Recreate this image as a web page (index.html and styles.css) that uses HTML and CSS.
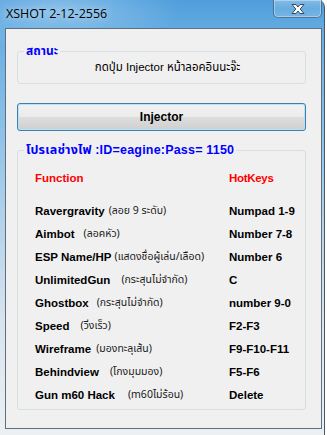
FILE: index.html
```
<!DOCTYPE html>
<html lang="th">
<head>
<meta charset="utf-8">
<title>XSHOT 2-12-2556</title>
<link rel="stylesheet" href="styles.css">
</head>
<body>
<div class="window">
  <div class="titlebar">
    <span class="title">XSHOT 2-12-2556</span>
    <div class="close">
      <svg width="20" height="12" viewBox="0 0 20 12">
        <path d="M4 1.5 H8 L10 4 L12 1.5 H16 L12.2 6 L16 10.5 H12 L10 8 L8 10.5 H4 L7.8 6 Z" fill="#fff" stroke="#3a4a5c" stroke-width="1" stroke-linejoin="round"/>
      </svg>
    </div>
  </div>
  <div class="client">
    <fieldset class="group status">
      <legend>สถานะ</legend>
      <p class="status-text">กดปุ่ม Injector หน้าลอคอินนะจ๊ะ</p>
    </fieldset>
    <button class="btn" type="button">Injector</button>
    <fieldset class="group keys">
      <legend class="wide">โปรเลช่างไฟ :ID=eagine:Pass= 1150</legend>
      <div class="grid">
        <div class="head">Function</div><div class="head hk">HotKeys</div>
        <div class="row-gap"></div>
        <div class="fn"><b>Ravergravity</b><span class="th g4">(ลอย 9 ระดับ)</span></div><div class="key">Numpad 1-9</div>
        <div class="fn"><b>Aimbot</b><span class="th g9">(ลอคหัว)</span></div><div class="key">Number 7-8</div>
        <div class="fn"><b>ESP Name/HP</b><span class="th g3">(แสดงชื่อผู้เล่น/เลือด)</span></div><div class="key">Number 6</div>
        <div class="fn"><b>UnlimitedGun</b><span class="th g11">(กระสุนไม่จำกัด)</span></div><div class="key">C</div>
        <div class="fn"><b>Ghostbox</b><span class="th g8">(กระสุนไม่จำกัด)</span></div><div class="key">number 9-0</div>
        <div class="fn"><b>Speed</b><span class="th g11">(วิ่งเร็ว)</span></div><div class="key">F2-F3</div>
        <div class="fn"><b>Wireframe</b><span class="th g5">(มองทะลุเส้น)</span></div><div class="key">F9-F10-F11</div>
        <div class="fn"><b>Behindview</b><span class="th g11">(โกงมุมมอง)</span></div><div class="key">F5-F6</div>
        <div class="fn"><b>Gun m60 Hack</b><span class="th g13">(m60ไม่ร้อน)</span></div><div class="key">Delete</div>
      </div>
    </fieldset>
  </div>
</div>
</body>
</html>
```
FILE: styles.css
```
* { box-sizing: border-box; }
html, body { margin: 0; padding: 0; background: #ffffff; }
body { width: 327px; height: 435px; overflow: hidden; font-family: "Liberation Sans", Arial, "Noto Sans Thai", sans-serif; }

.window {
  width: 325px;
  height: 435px;
  padding: 0 2px 0 5px;
  border-right: 1px solid #4a5866;
  border-top-right-radius: 7px;
  background:
    radial-gradient(ellipse 120px 40px at 60px 10px, rgba(190,222,246,0.5), rgba(190,222,246,0) 100%),
    linear-gradient(180deg, #4f9edb 0px, #6aafe3 40px, #88bfe8 120px, #b3d2ea 220px, #d8e3ed 320px, #ecf0f3 435px);
}

.titlebar {
  height: 28px;
  display: flex;
  align-items: flex-start;
}
.title {
  font-family: "Open Sans", "Noto Sans", sans-serif;
  font-size: 12.5px;
  color: #000;
  margin: 6px 0 0 1px;
  line-height: 16px;
  text-shadow: 0 0 6px rgba(255,255,255,0.7);
}
.close {
  margin-left: auto;
  width: 49px;
  height: 18px;
  border: 1px solid rgba(40,60,80,0.55);
  border-top: none;
  border-radius: 0 0 5px 5px;
  background: linear-gradient(180deg, rgba(255,255,255,0.3), rgba(255,255,255,0.12) 50%, rgba(200,225,245,0.25));
  box-shadow: inset 0 0 0 1px rgba(255,255,255,0.35);
  display: flex;
  align-items: center;
  justify-content: center;
}

.client {
  height: 401px;
  background: #f0f0f0;
  border: 1px solid #5f6f80;
  padding: 15px 15px 0 11px;
  display: flex;
  flex-direction: column;
}

.group {
  margin: 0;
  padding: 0;
  border: 1px solid #d5dfe5;
  border-radius: 3px;
  min-width: 0;
}
.group legend {
  margin-left: 6px;
  padding: 0 2px;
  color: #0000ff;
  font-weight: bold;
  font-size: 12px;
  line-height: 14px;
}
.group legend.wide { font-size: 12.5px; letter-spacing: 0.2px; }
.status-text {
  margin: 2px 0 9px;
  text-align: center;
  font-size: 11.5px;
  line-height: 14px;
  color: #000;
  padding-left: 12px;
}

.btn {
  margin-top: 19px;
  height: 28px;
  width: 289px;
  border: 1px solid #3c7fb1;
  border-radius: 3px;
  background: linear-gradient(180deg, #f2f2f2 0%, #ebebeb 48%, #dddddd 52%, #cfcfcf 100%);
  box-shadow: inset 0 0 0 1px #b8e3f7;
  font-family: "Liberation Sans", Arial, sans-serif;
  font-weight: bold;
  font-size: 12px;
  color: #000;
  padding: 0;
}

.keys { margin-top: 12px; }
.grid {
  display: grid;
  grid-template-columns: 194px 1fr;
  grid-template-rows: 23px 10px;
  grid-auto-rows: 23px;
  padding: 9px 0 3px 17px;
  font-size: 11.5px;
  color: #000;
}
.grid > div { display: flex; align-items: center; white-space: nowrap; }
.grid > .row-gap { grid-column: 1 / -1; height: 10px; }
.head { color: #ff0000; font-weight: bold; }
.head.hk { letter-spacing: -0.3px; }
.fn b { font-weight: bold; }
.key { font-weight: bold; }
.th {
  font-family: Tahoma, "Noto Sans Thai", "Liberation Sans", sans-serif;
  font-size: 10.5px;
  color: #1a1a1a;
}
.g3 { margin-left: 3px; }
.g4 { margin-left: 4px; }
.g5 { margin-left: 5px; }
.g8 { margin-left: 8px; }
.g9 { margin-left: 9px; }
.g11 { margin-left: 11px; }
.g13 { margin-left: 13px; }
```
